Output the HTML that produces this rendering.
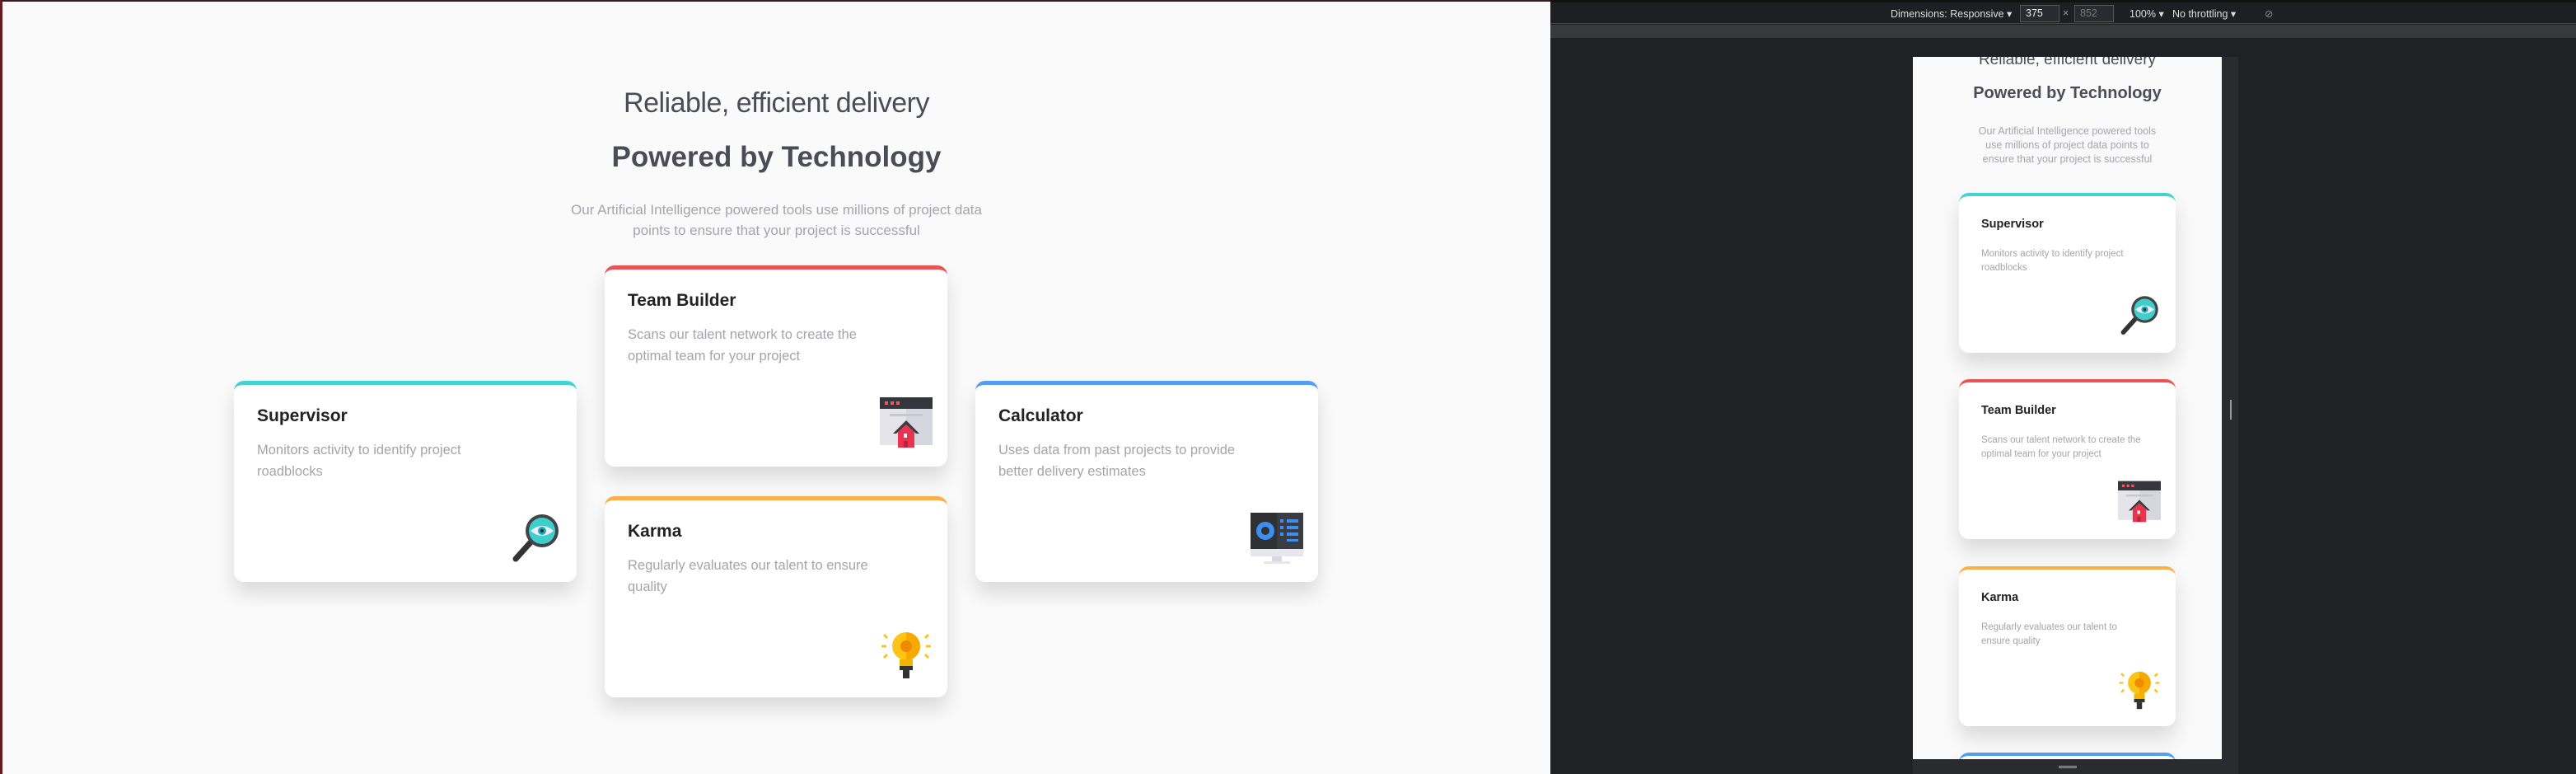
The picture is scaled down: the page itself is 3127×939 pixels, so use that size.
<!DOCTYPE html>
<html style="overflow:hidden"><head><meta charset="utf-8"><style>
*{margin:0;padding:0;box-sizing:border-box}
html,body{width:3127px;height:939px;overflow:hidden}
body{background:#202124;font-family:"Liberation Sans",sans-serif;position:relative}
.left{position:absolute;left:0;top:0;width:1882px;height:939px;background:#fafafa;border-left:3px solid #6b1a22;border-top:2px solid #3a1a1e;overflow:hidden}
.c{position:absolute;text-align:center;left:0;width:100%}
.card{position:absolute;background:#fff;border-radius:12px;box-shadow:0 14px 24px rgba(0,0,0,.13);border-top:5px solid}
.card h3{position:absolute;font-weight:700;color:#222;}
.card p{position:absolute;color:#a4a4ac;}
.card svg{position:absolute}
.d .card{width:416px;height:244px}
.d h3{left:28px;top:26px;font-size:21px}
.d p{left:28px;top:66px;font-size:16.5px;line-height:26px;width:305px}
.d svg{right:18px;bottom:22px;width:64px;height:64px}
.m .card{width:263px;height:194px;border-top-width:4px}
.m h3{left:27px;top:26px;font-size:14.5px}
.m p{left:27px;top:62px;font-size:11.5px;line-height:17px;width:198px}
.m svg{right:18px;bottom:20px;width:52px;height:52px}
.tb{position:absolute;left:1882px;top:0;width:1245px;height:29px;background:#1e1f22;border-top:3px solid #111;border-bottom:1px solid #444;color:#ddd;font-size:12.5px}
.tb span{position:absolute;top:6px}
.box{position:absolute;top:3px;height:21px;border:1px solid #555;background:#2a2b2e;padding:2px 6px}
</style></head><body>
<svg width="0" height="0" style="position:absolute">
<defs>
<g id="sup"><line x1="8" y1="58" x2="26" y2="38" stroke="#333" stroke-width="7" stroke-linecap="round"/><circle cx="40" cy="24" r="20" fill="#444"/><circle cx="40" cy="24" r="16" fill="#3ecfcd"/><path d="M26 24 Q40 12 54 24 Q40 36 26 24Z" fill="#eef"/><circle cx="40" cy="24" r="5" fill="#2aa"/><circle cx="40" cy="24" r="2" fill="#134"/></g>
<g id="team"><rect x="0" y="2" width="64" height="58" fill="#e4e4ea"/><rect x="32" y="2" width="32" height="58" fill="#d6d6de"/><rect x="0" y="2" width="64" height="14" fill="#34363c"/><rect x="6" y="7" width="4" height="4" fill="#ea5a6a"/><rect x="13" y="7" width="4" height="4" fill="#ea5a6a"/><rect x="20" y="7" width="4" height="4" fill="#ea5a6a"/><rect x="12" y="22" width="40" height="3" fill="#c8c8d2"/><path d="M16 46 L32 30 L48 46 L44 46 L32 35 L20 46Z" fill="#3a3c42"/><path d="M22 44 L32 35 L42 44 L42 63 L22 63Z" fill="#e8344e"/><rect x="29" y="46" width="4" height="5" fill="#fff"/><rect x="29" y="55" width="5" height="8" fill="#c0203a"/></g>
<g id="karma"><circle cx="32" cy="24" r="17" fill="#fdc418"/><path d="M32 7 A17 17 0 0 1 32 41Z" fill="#f7a900"/><circle cx="32" cy="24" r="7" fill="#f08a00"/><rect x="24" y="40" width="16" height="8" fill="#f3b400"/><rect x="24" y="48" width="16" height="5" fill="#333"/><rect x="28" y="53" width="8" height="10" fill="#333"/><g stroke="#fdc418" stroke-width="3"><line x1="2" y1="24" x2="8" y2="24"/><line x1="56" y1="24" x2="62" y2="24"/><line x1="5" y1="10" x2="9" y2="14"/><line x1="59" y1="10" x2="55" y2="14"/><line x1="5" y1="38" x2="9" y2="34"/><line x1="59" y1="38" x2="55" y2="34"/></g></g>
<g id="calc"><rect x="0" y="2" width="64" height="44" fill="#2e3034"/><rect x="32" y="2" width="32" height="44" fill="#3a3c41"/><circle cx="18" cy="24" r="11" fill="#3d8ef0"/><circle cx="18" cy="24" r="5" fill="#2e3034"/><g fill="#3d8ef0"><rect x="36" y="10" width="4" height="4"/><rect x="44" y="10" width="14" height="4"/><rect x="36" y="18" width="4" height="4"/><rect x="44" y="18" width="14" height="4"/><rect x="36" y="26" width="4" height="4"/><rect x="44" y="26" width="14" height="4"/><rect x="44" y="34" width="14" height="3"/></g><rect x="0" y="46" width="64" height="9" fill="#e6e6ec"/><rect x="26" y="55" width="12" height="6" fill="#d8d8e0"/><rect x="16" y="61" width="32" height="3" fill="#e6e6ec"/></g>
</defs></svg>

<div class="left d">
<div class="c" style="top:104px;font-size:34px;color:#4a4d58;font-weight:300;letter-spacing:-.5px">Reliable, efficient delivery</div>
<div class="c" style="top:169px;font-size:35px;color:#4a4d58;font-weight:700">Powered by Technology</div>
<div class="c" style="top:240px;font-size:17px;color:#a4a4ac;line-height:25px">Our Artificial Intelligence powered tools use millions of project data<br>points to ensure that your project is successful</div>
<div class="card" style="left:281px;top:460px;border-color:#44d3d2"><h3>Supervisor</h3><p>Monitors activity to identify project roadblocks</p><svg viewBox="0 0 64 64"><use href="#sup"/></svg></div>
<div class="card" style="left:731px;top:320px;border-color:#ea5454"><h3>Team Builder</h3><p>Scans our talent network to create the optimal team for your project</p><svg viewBox="0 0 64 64"><use href="#team"/></svg></div>
<div class="card" style="left:731px;top:600px;border-color:#fcaf4a"><h3>Karma</h3><p>Regularly evaluates our talent to ensure quality</p><svg viewBox="0 0 64 64"><use href="#karma"/></svg></div>
<div class="card" style="left:1181px;top:460px;border-color:#549ef2"><h3>Calculator</h3><p>Uses data from past projects to provide better delivery estimates</p><svg viewBox="0 0 64 64"><use href="#calc"/></svg></div>
</div>

<div class="tb">
<span style="left:413px">Dimensions: Responsive ▾</span>
<div class="box" style="left:570px;width:48px;color:#eee">375</div>
<span style="left:622px;color:#999">×</span>
<div class="box" style="left:636px;width:48px;color:#777">852</div>
<span style="left:703px">100% ▾</span>
<span style="left:755px">No throttling ▾</span>
<span style="left:867px;color:#888">⊘</span>
</div>
<div style="position:absolute;left:1882px;top:30px;width:1245px;height:16px;background:#38393c"></div>
<div style="position:absolute;left:2697px;top:69px;width:20px;height:852px;background:#2a2b2e"></div>
<div style="position:absolute;left:2707px;top:485px;width:2px;height:24px;background:#999"></div>
<div style="position:absolute;left:2322px;top:921px;width:395px;height:18px;background:#2a2b2e"></div>
<div style="position:absolute;left:2499px;top:929px;width:22px;height:3px;border-top:1px solid #aaa;border-bottom:1px solid #aaa"></div>

<div class="m" style="position:absolute;left:2322px;top:69px;width:375px;height:852px;background:#fafafa;overflow:hidden">
<div class="c" style="top:-7px;font-size:19px;color:#4a4d58;font-weight:300">Reliable, efficient delivery</div>
<div class="c" style="top:33px;font-size:20px;color:#4a4d58;font-weight:700">Powered by Technology</div>
<div class="c" style="top:82px;font-size:12.5px;color:#a4a4ac;line-height:17px">Our Artificial Intelligence powered tools<br>use millions of project data points to<br>ensure that your project is successful</div>
<div class="card" style="left:56px;top:165px;border-color:#44d3d2"><h3>Supervisor</h3><p>Monitors activity to identify project roadblocks</p><svg viewBox="0 0 64 64"><use href="#sup"/></svg></div>
<div class="card" style="left:56px;top:391px;border-color:#ea5454"><h3>Team Builder</h3><p>Scans our talent network to create the optimal team for your project</p><svg viewBox="0 0 64 64"><use href="#team"/></svg></div>
<div class="card" style="left:56px;top:618px;border-color:#fcaf4a"><h3>Karma</h3><p>Regularly evaluates our talent to ensure quality</p><svg viewBox="0 0 64 64"><use href="#karma"/></svg></div>
<div class="card" style="left:56px;top:844px;border-color:#549ef2"></div>
</div>
</body></html>
